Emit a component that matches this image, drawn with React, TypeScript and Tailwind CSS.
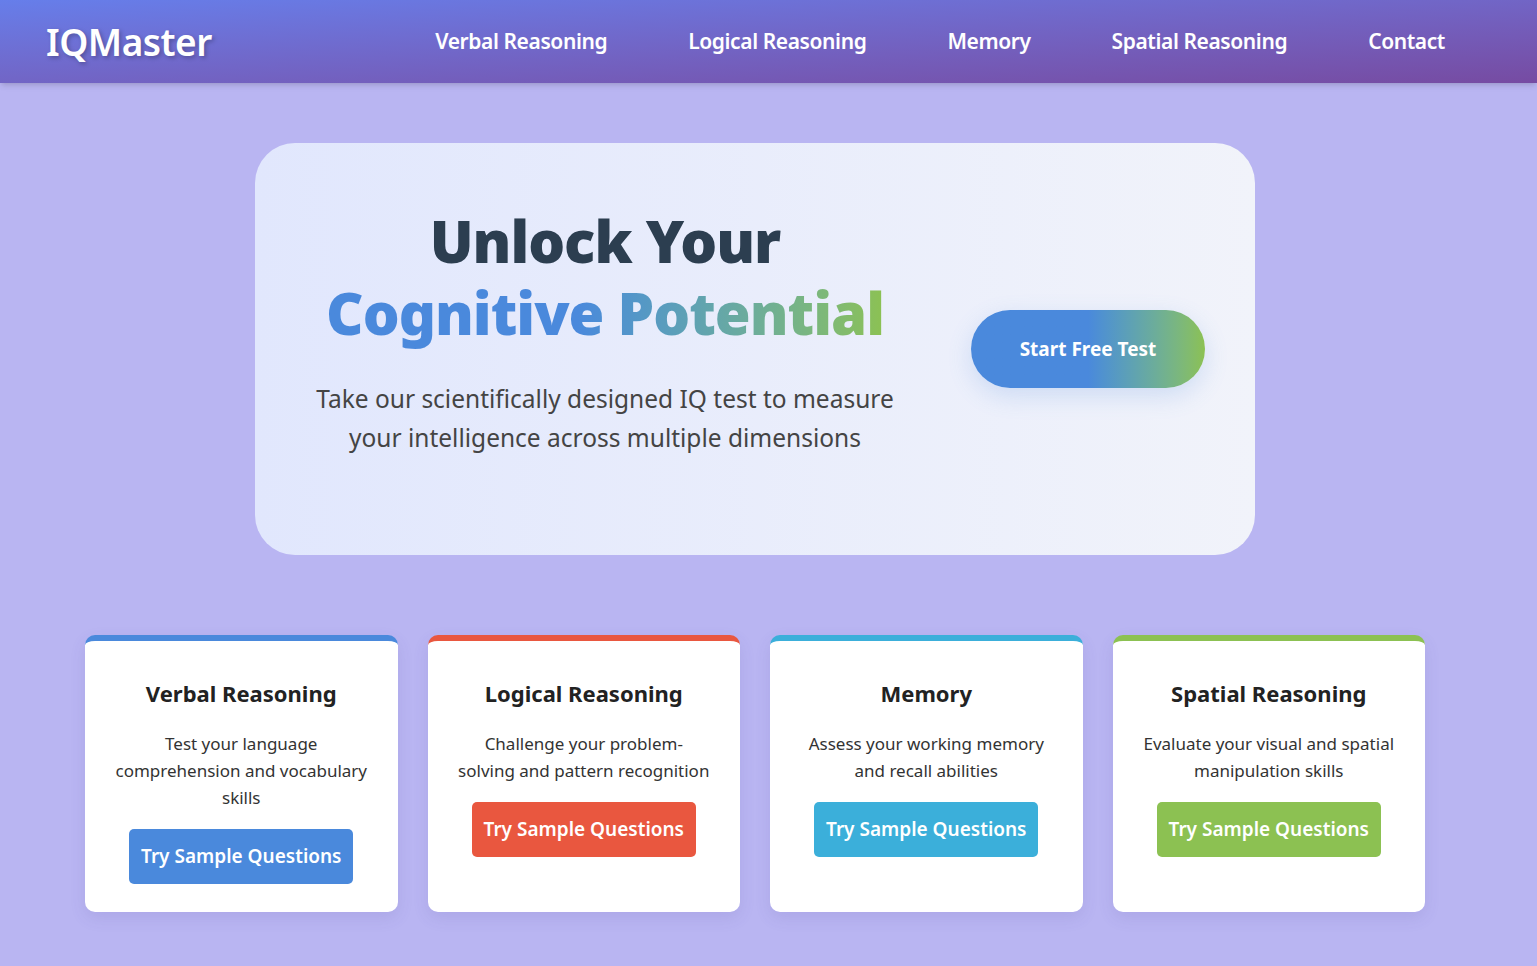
import React from "react";

// Landing page for the IQ test: header, hero and category cards.
const navLinks = ["Verbal Reasoning", "Logical Reasoning", "Memory", "Spatial Reasoning", "Contact"];

const categories = [
  {
    title: "Verbal Reasoning",
    text: "Test your language comprehension and vocabulary skills",
    border: "border-[#4a89dc]",
    button: "bg-[#4a89dc]",
  },
  {
    title: "Logical Reasoning",
    text: "Challenge your problem-solving and pattern recognition",
    border: "border-[#e9573f]",
    button: "bg-[#e9573f]",
  },
  {
    title: "Memory",
    text: "Assess your working memory and recall abilities",
    border: "border-[#3bafda]",
    button: "bg-[#3bafda]",
  },
  {
    title: "Spatial Reasoning",
    text: "Evaluate your visual and spatial manipulation skills",
    border: "border-[#8cc152]",
    button: "bg-[#8cc152]",
  },
];

export default function App() {
  return (
    <div className="min-h-screen bg-[#b9b5f2] font-['Noto_Sans',sans-serif] text-[#333]">
      <header className="flex h-[83px] items-center justify-between bg-gradient-to-br from-[#667eea] to-[#764ba2] pl-[46px] pr-[92px] shadow-md">
        <div className="text-[37px] font-semibold tracking-[-0.5px] text-white [text-shadow:2px_2px_4px_rgba(0,0,0,0.25)]">
          IQMaster
        </div>
        <nav className="flex gap-[81px] text-[21px] font-semibold tracking-[-0.4px] text-white">
          {navLinks.map((link) => (
            <a key={link} href="#">
              {link}
            </a>
          ))}
        </nav>
      </header>

      <main className="pt-[60px] pb-[55px]">
        {/* Hero */}
        <section className="ml-[255px] flex h-[412px] w-[1000px] items-center gap-[64px] rounded-[40px] bg-gradient-to-r from-[#e1e7fd] to-[#f1f3fa] pl-12 pr-[50px]">
          <div className="w-[604px] pb-[36px] text-center">
            <h1 className="text-[58px] font-black leading-[72px] tracking-[-1px] text-[#2c3e50]">
              Unlock Your
              <br />
              <span className="bg-gradient-to-r from-[#4a89dc] from-45% to-[#8cc152] bg-clip-text text-transparent">
                Cognitive Potential
              </span>
            </h1>
            <p className="mt-[30px] text-[24.5px] leading-[39px] text-[#444]">
              Take our scientifically designed IQ test to measure your intelligence across multiple dimensions
            </p>
          </div>
          <button className="h-[78px] w-[234px] shrink-0 rounded-full bg-gradient-to-r from-[#4a89dc] from-50% to-[#8cc152] text-[19px] font-bold text-white shadow-[0_8px_24px_rgba(74,137,220,0.2)]">
            Start Free Test
          </button>
        </section>

        {/* Categories */}
        <section className="ml-[85px] mt-[80px] grid w-[1340px] grid-cols-4 gap-[30px]">
          {categories.map((c) => (
            <div
              key={c.title}
              className={`rounded-[10px] border-t-[6px] ${c.border} bg-white px-[30px] pt-[36px] pb-[28px] text-center shadow-[0_6px_16px_rgba(80,70,160,0.12)]`}
            >
              <h3 className="text-[22px] font-bold leading-[33px] text-[#222]">{c.title}</h3>
              <p className="mt-[20px] text-[17px] leading-[27px] text-[#333]">{c.text}</p>
              <button
                className={`mt-[18px] h-[55px] rounded-[5px] px-[12px] text-[19px] font-semibold text-white ${c.button}`}
              >
                Try Sample Questions
              </button>
            </div>
          ))}
        </section>
      </main>
    </div>
  );
}
